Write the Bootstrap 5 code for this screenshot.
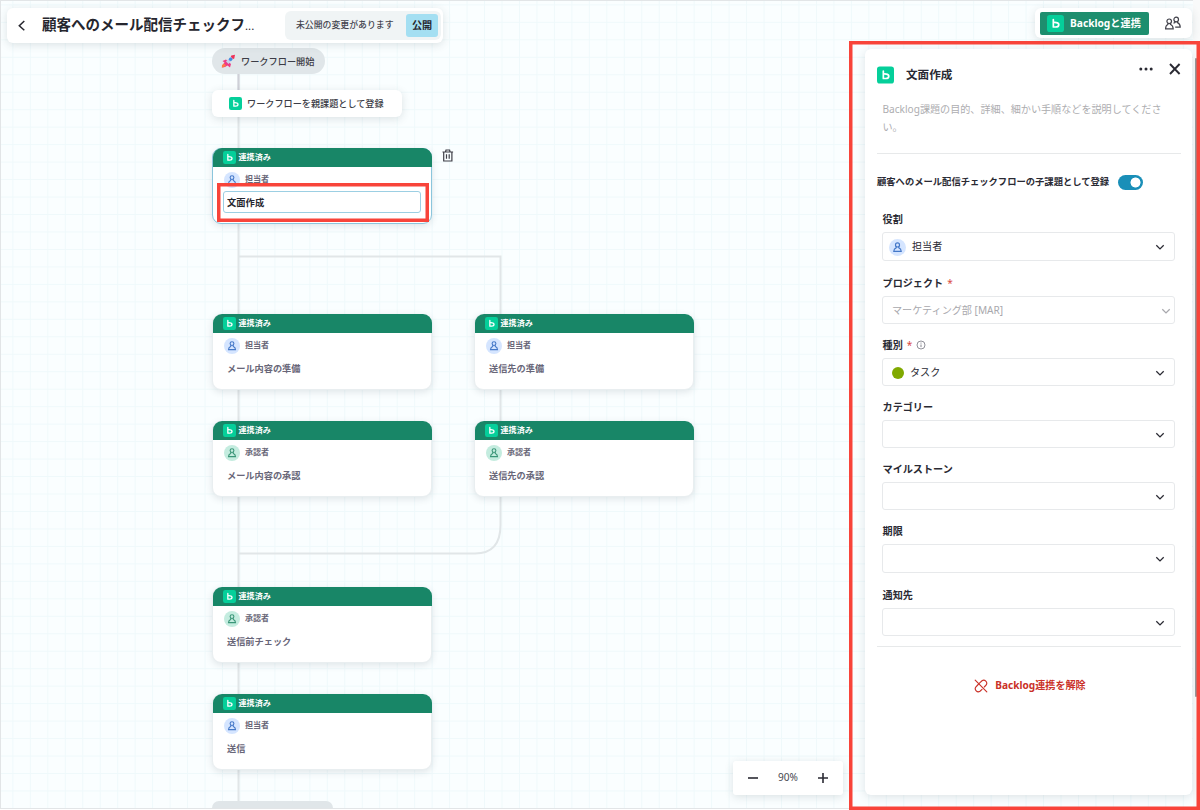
<!DOCTYPE html>
<html lang="ja">
<head>
<meta charset="utf-8">
<meta name="viewport" content="width=device-width, initial-scale=1">
<title>ワークフロー編集</title>
<link href="https://cdn.jsdelivr.net/npm/bootstrap@5.3.0/dist/css/bootstrap.min.css" rel="stylesheet">
<style>
  body { font-family: "Noto Sans", "Noto Sans CJK JP", sans-serif; font-size: 10.1px; line-height: 1.5; color: #2a2a33; background: #fff; }
  .stage { width: 1200px; height: 810px; }
  .board { height: 809px; border: 1px solid #e2e5e7; border-right: 0;
    background-color: #fafeff;
    background-image: linear-gradient(90deg, #eff9fb 1px, transparent 1px), linear-gradient(#eff9fb 1px, transparent 1px);
    background-size: 17.47px 17.47px; background-position: 11.4px 3.4px; }
  .wires { left: 0; top: 0; }
  .floating { background: #fff; border-radius: 6px; box-shadow: 0 2px 9px rgba(50, 65, 75, .15); }
  .title-bar { left: 7px; top: 8px; width: 436px; height: 35px; padding: 0 5px 0 10px; }
  .flow-title { font-size: 14.5px; font-weight: 700; width: 216px; margin-left: 15px; margin-top: -1px; color: #26262e; }
  .flow-title span { font-size: 11.5px; }
  .publish-box { background: #f0f4f5; border-radius: 6px; height: 29px; width: 156px; padding: 0 3px 0 11px; font-size: 8.88px; font-weight: 500; color: #44444f; margin-left: auto; margin-right: -3px; margin-top: -1px; }
  .publish-box span { padding-top: 2px; }
  .btn-publish { background: #a4dff2; color: #26262e; font-size: 10.1px; font-weight: 700; border: 0; border-radius: 3px; width: 32px; height: 23px; padding: 0; line-height: 23px; }
  .link-bar { left: 1035px; top: 8px; width: 157px; height: 30px; padding-left: 5px; }
  .btn-link-up { background: #1e8e6e; color: #fff; font-size: 10.2px; font-weight: 700; border: 0; border-radius: 2px; width: 109px; height: 23px; padding: 0 0 0 7px; gap: 6px; }
  .btn-link-up span { padding-top: 2px; }
  .start-pill { left: 212px; top: 48px; width: 113px; height: 26px; border-radius: 13px; background: #e0e6e9; font-size: 9.2px; font-weight: 500; color: #3c3c46; padding-left: 9px; gap: 5px; padding-top: 1px; }
  .end-pill { left: 212px; top: 801px; width: 121px; height: 7px; border-radius: 13px 13px 0 0; background: #e0e6e9; }
  .parent-node { left: 212px; top: 90px; width: 190px; height: 27px; padding-left: 17px; gap: 5px; font-size: 9.15px; font-weight: 500; color: #3c3c46; }
  .step { width: 220px; height: 76px; border-radius: 9px; background: #fff; border: 1px solid #e9eef0; box-shadow: 0 2px 7px rgba(50, 65, 75, .13); }
  .step-head { background: #188667; color: #fff; font-size: 8.1px; font-weight: 700; height: 18.5px; margin: -1px -.5px 0; border-radius: 9px 9px 0 0; padding-left: 10px; gap: 3px; }
  .step-role { font-size: 8.05px; font-weight: 700; color: #696778; height: 16px; margin: 5px 0 0 11px; gap: 5px; }
  .step-name { font-size: 9.2px; font-weight: 700; color: #686678; margin: 7px 0 0 14px; line-height: 16px; }
  .step.active { border-color: #8bc5dc; }
  .step-input { display: block; margin: 3.5px 10px 0 10px; width: 198px; height: 22px; border: 1px solid #9ccfe3; border-radius: 3px; padding: 0 3px; font-size: 9.3px; font-weight: 700; color: #26262e; line-height: 20px; }
  .at-a { left: 212px; top: 148px; } .at-b { left: 212px; top: 314px; } .at-c { left: 474px; top: 314px; }
  .at-d { left: 212px; top: 421px; } .at-e { left: 474px; top: 421px; } .at-f { left: 212px; top: 587px; } .at-g { left: 212px; top: 694px; }
  .trash { left: 442px; top: 149px; }
  .mark-frame { box-shadow: inset 0 0 0 3.5px #f8443a; }
  .mark-input { left: 217px; top: 183px; width: 212px; height: 39px; }
  .mark-panel { left: 849px; top: 41px; width: 351px; height: 769px; }
  .thumb { left: 1195px; top: 58px; width: 2px; height: 639px; background: #929798; border-radius: 1px; }
  .gutter { left: 1193px; top: 0; width: 7px; height: 809px; background: #f9fafa; }
  .zoom-box { left: 733px; top: 761px; width: 110px; height: 34px; border-radius: 3px; padding: 0 14px; font-size: 10.1px; color: #4a4a52; }
  .side { left: 865px; top: 49px; width: 327px; height: 746px; padding: 0 11px 0 12px; box-shadow: 0 2px 10px rgba(50, 65, 75, .14); }
  .side-head { padding-top: 17px; height: 52px; }
  .side-title { font-size: 11.6px; font-weight: 700; line-height: 18px; margin-left: 12px; }
  .side-close { margin-top: -3px; }
  .desc { color: #adadb0; line-height: 17.5px; height: 52px; padding: 0 5.5px; width: 293px; margin: 0; }
  .rule { height: 1px; background: #e7e9ea; }
  .switch-row { height: 57px; padding-bottom: 1px; font-size: 9.3px; font-weight: 700; gap: 8.5px; }
  .form-switch .form-check-input { width: 25px; height: 15px; margin: 0; border: 0; background-color: #1a8fb8; background-size: 15px; box-shadow: none;
    background-image: radial-gradient(circle, #fff 0 4.7px, transparent 5.3px); background-position: right 0 center; background-repeat: no-repeat; }
  .field { padding: 0 6px 0 5px; margin-bottom: 14px; width: 304px; }
  .field.final { margin-bottom: 11px; }
  .field-name { line-height: 16px; height: 16px; font-weight: 700; margin-bottom: 5px; gap: 4px; padding-left: .6px; }
  .field-name b { color: #d9483f; font-weight: 400; }
  .picker { height: 27px; border: 1px solid #e7e9eb; border-radius: 3px; padding: 1px 9px 0; background: #fff; }
  .picker.tall { height: 29px; }
  .picker.mid { height: 28px; margin-bottom: -1px; }
  .picker.picker-off { color: #a8a8ad; padding-right: 3px; }
  .picker.picker-who { padding-left: 6px; gap: 6px; }
  .dot { width: 12px; height: 12px; border-radius: 50%; background: #80a900; margin-right: 6px; }
  .unlink { color: #ca3128; font-weight: 700; gap: 7px; margin-top: 30px; height: 18px; padding-left: 2px; }
</style>
</head>
<body>
<svg width="0" height="0" class="position-absolute" aria-hidden="true">
  <symbol id="logo" viewBox="0 0 18 18"><rect width="18" height="18" rx="3" fill="#05cf9a"/><path d="M6.700 4.800v7.900h2.500c4.300 0 4.200-4.500.6-4.700L8.200 7.900" fill="none" stroke="#fff" stroke-width="1.800" stroke-linejoin="round" stroke-linecap="round"/></symbol>
  <symbol id="person" viewBox="0 0 16 16"><circle cx="8" cy="5.600" r="1.900"/><path d="M6.900 7.200 6.700 8.400C5.300 8.900 4.600 9.800 4.500 11.600h7C11.400 9.800 10.700 8.900 9.300 8.400L9.100 7.200"/></symbol>
  <symbol id="who-blue" viewBox="0 0 16 16"><circle cx="8" cy="8" r="8" fill="#d5e5ff"/><use href="#person" width="16" height="16" fill="none" stroke="#4478c8" stroke-width="1.100"/></symbol>
  <symbol id="who-green" viewBox="0 0 16 16"><circle cx="8" cy="8" r="8" fill="#c4ecdf"/><use href="#person" width="16" height="16" fill="none" stroke="#3b9678" stroke-width="1.100"/></symbol>
  <symbol id="down" viewBox="0 0 10 10"><path d="m1.300 3.200 3.700 3.700 3.700-3.700" fill="none" stroke="currentColor" stroke-width="1.300"/></symbol>
</svg>
<main class="stage position-relative overflow-hidden">
  <div class="board"></div>
  <svg class="wires position-absolute" width="1200" height="808" fill="none" stroke="#e1e6e8" stroke-width="2">
    <path d="M238.500 74V803M239 256.500H500.500V525Q500.500 553.500 475 553.500H239"/>
    <path d="M238.500 74V90" stroke="#cfd0d8"/>
  </svg>

  <div class="start-pill position-absolute d-flex align-items-center">
    <svg width="15" height="15" viewBox="0 0 15 15"><path d="m1.500 7 3.500-1.500 5 4.500-1 3.500-2.500-2L4 13l-2.500.5L2 10.500l1.500-2z" fill="#ee3b86"/><path d="m5 7.500 5.500-5.500 2.500 2.500L7.500 10z" fill="#c5cfe8"/><path d="m10.300 1.500 3.700-.8-.7 3.800-1.300.5-2.200-2.200z" fill="#ef3158"/><circle cx="9.600" cy="5.300" r="1.700" fill="#418fe0"/><path d="m1 11 2-1.500L5 11.500 3 13l-2.200.8z" fill="#ff7a45"/></svg>
    <span>ワークフロー開始</span>
  </div>
  <div class="parent-node floating position-absolute d-flex align-items-center"><svg width="13" height="13"><use href="#logo"/></svg><span>ワークフローを親課題として登録</span></div>

  <section class="step active position-absolute at-a">
    <div class="step-head d-flex align-items-center"><svg width="13" height="13"><use href="#logo"/></svg>連携済み</div>
    <div class="step-role d-flex align-items-center"><svg width="16" height="16"><use href="#who-blue"/></svg>担当者</div>
    <input class="step-input" value="文面作成" aria-label="課題名">
  </section>
  <section class="step position-absolute at-b">
    <div class="step-head d-flex align-items-center"><svg width="13" height="13"><use href="#logo"/></svg>連携済み</div>
    <div class="step-role d-flex align-items-center"><svg width="16" height="16"><use href="#who-blue"/></svg>担当者</div>
    <div class="step-name">メール内容の準備</div>
  </section>
  <section class="step position-absolute at-c">
    <div class="step-head d-flex align-items-center"><svg width="13" height="13"><use href="#logo"/></svg>連携済み</div>
    <div class="step-role d-flex align-items-center"><svg width="16" height="16"><use href="#who-blue"/></svg>担当者</div>
    <div class="step-name">送信先の準備</div>
  </section>
  <section class="step position-absolute at-d">
    <div class="step-head d-flex align-items-center"><svg width="13" height="13"><use href="#logo"/></svg>連携済み</div>
    <div class="step-role d-flex align-items-center"><svg width="16" height="16"><use href="#who-green"/></svg>承認者</div>
    <div class="step-name">メール内容の承認</div>
  </section>
  <section class="step position-absolute at-e">
    <div class="step-head d-flex align-items-center"><svg width="13" height="13"><use href="#logo"/></svg>連携済み</div>
    <div class="step-role d-flex align-items-center"><svg width="16" height="16"><use href="#who-green"/></svg>承認者</div>
    <div class="step-name">送信先の承認</div>
  </section>
  <section class="step position-absolute at-f">
    <div class="step-head d-flex align-items-center"><svg width="13" height="13"><use href="#logo"/></svg>連携済み</div>
    <div class="step-role d-flex align-items-center"><svg width="16" height="16"><use href="#who-green"/></svg>承認者</div>
    <div class="step-name">送信前チェック</div>
  </section>
  <section class="step position-absolute at-g">
    <div class="step-head d-flex align-items-center"><svg width="13" height="13"><use href="#logo"/></svg>連携済み</div>
    <div class="step-role d-flex align-items-center"><svg width="16" height="16"><use href="#who-blue"/></svg>担当者</div>
    <div class="step-name">送信</div>
  </section>
  <svg class="trash position-absolute" width="12" height="14" viewBox="0 0 12 14" fill="none" stroke="#3f3f48" stroke-width="1.200"><path d="M.5 3h10.600M3.500 3 4 1h3.600l.5 2M1.700 3v9h8.200V3M4.500 5.300v4.500M7.200 5.300v4.500"/></svg>
  <div class="end-pill position-absolute"></div>
  <div class="mark-frame mark-input position-absolute"></div>

  <header class="title-bar floating position-absolute d-flex align-items-center">
    <svg width="10" height="12" viewBox="0 0 10 12" fill="none" stroke="#26262e" stroke-width="1.500"><path d="M7.300 1 2.300 5.700l5 4.600"/></svg>
    <div class="flow-title text-nowrap">顧客へのメール配信チェックフ<span class="fw-normal">...</span></div>
    <div class="publish-box d-flex align-items-center justify-content-between"><span>未公開の変更があります</span><button class="btn btn-publish">公開</button></div>
  </header>

  <div class="gutter position-absolute"></div>
  <div class="link-bar floating position-absolute d-flex align-items-center">
    <button class="btn btn-link-up d-flex align-items-center text-nowrap"><svg width="17" height="17"><use href="#logo"/></svg><span>Backlogと連携</span></button>
    <svg class="ms-3" width="17" height="15" viewBox="1.800 .5 17 15" fill="none" stroke="#42424b" stroke-width="1.200"><circle cx="6" cy="5.800" r="2.300"/><path d="M4.600 7.700v1.300C2.900 9.700 2.400 10.700 2.400 13.300h7.600C9.800 10.700 9.100 9.700 7.400 9V7.700"/><circle cx="13" cy="4" r="2.300"/><path d="M11.700 5.900v1.200l-1.400.7M14.300 5.900v1.200c1.900.8 2.700 2 2.700 4.500h-5"/></svg>
  </div>

  <aside class="side floating position-absolute">
    <div class="side-head d-flex align-items-start">
      <svg width="17" height="18"><use href="#logo"/></svg>
      <div class="side-title">文面作成</div>
      <svg class="ms-auto" width="14" height="6" viewBox="0 0 14 6" fill="#2a2a33"><circle cx="1.800" cy="3" r="1.500"/><circle cx="7" cy="3" r="1.500"/><circle cx="12.200" cy="3" r="1.500"/></svg>
      <svg class="side-close ms-3" width="12" height="12" viewBox="0 0 12 12" fill="none" stroke="#2a2a33" stroke-width="1.900"><path d="m1 1 9.600 10M10.600 1 1 11"/></svg>
    </div>
    <p class="desc">Backlog課題の目的、詳細、細かい手順などを説明してください。</p>
    <div class="rule"></div>
    <div class="switch-row form-switch ps-0 d-flex align-items-center text-nowrap"><label for="child">顧客へのメール配信チェックフローの子課題として登録</label><input id="child" class="form-check-input" type="checkbox" checked></div>
    <div class="field">
      <div class="field-name d-flex">役割</div>
      <div class="picker tall picker-who d-flex align-items-center"><svg width="17" height="17"><use href="#who-blue"/></svg><span>担当者</span><svg class="ms-auto" width="10" height="10"><use href="#down"/></svg></div>
    </div>
    <div class="field">
      <div class="field-name d-flex">プロジェクト<b>*</b></div>
      <div class="picker mid picker-off d-flex align-items-center"><span>マーケティング部 [MAR]</span><svg class="ms-auto" width="10" height="10"><use href="#down"/></svg></div>
    </div>
    <div class="field">
      <div class="field-name d-flex align-items-center">種別<b>*</b><svg width="10" height="10" viewBox="0 0 10 10" fill="none" stroke="#85858f"><circle cx="5" cy="5" r="4" stroke-width=".9"/><path d="M5 4.500v2.600M5 2.600v1"/></svg></div>
      <div class="picker mid d-flex align-items-center"><span class="dot"></span><span>タスク</span><svg class="ms-auto" width="10" height="10"><use href="#down"/></svg></div>
    </div>
    <div class="field">
      <div class="field-name d-flex">カテゴリー</div>
      <div class="picker mid d-flex align-items-center"><svg class="ms-auto" width="10" height="10"><use href="#down"/></svg></div>
    </div>
    <div class="field">
      <div class="field-name d-flex">マイルストーン</div>
      <div class="picker mid d-flex align-items-center"><svg class="ms-auto" width="10" height="10"><use href="#down"/></svg></div>
    </div>
    <div class="field">
      <div class="field-name d-flex">期限</div>
      <div class="picker tall d-flex align-items-center"><svg class="ms-auto" width="10" height="10"><use href="#down"/></svg></div>
    </div>
    <div class="field final">
      <div class="field-name d-flex">通知先</div>
      <div class="picker mid d-flex align-items-center"><svg class="ms-auto" width="10" height="10"><use href="#down"/></svg></div>
    </div>
    <div class="rule"></div>
    <div class="unlink d-flex align-items-center justify-content-center"><svg width="14" height="14" viewBox="0 0 14 14" fill="none" stroke="#ca3128" stroke-width="1.150" stroke-linecap="round"><path d="M1.200 1.200 12.800 12.800M6 3.600 8 1.800C10.700 0 14 3.200 12.200 6L10.300 8M3.700 6 1.800 8C0 10.700 3.200 14 6 12.200L8 10.300M6 3.600 3.700 6"/></svg>Backlog連携を解除</div>
  </aside>

  <div class="zoom-box floating position-absolute d-flex align-items-center justify-content-between">
    <svg width="12" height="12" stroke="#2a2a33" stroke-width="1.600"><path d="M1 6h10"/></svg><span>90%</span><svg width="12" height="12" stroke="#2a2a33" stroke-width="1.600"><path d="M1 6h10M6 1v10"/></svg>
  </div>
  <div class="thumb position-absolute"></div>
  <div class="mark-frame mark-panel position-absolute"></div>
</main>
<script src="https://cdn.jsdelivr.net/npm/bootstrap@5.3.0/dist/js/bootstrap.bundle.min.js"></script>
</body>
</html>
